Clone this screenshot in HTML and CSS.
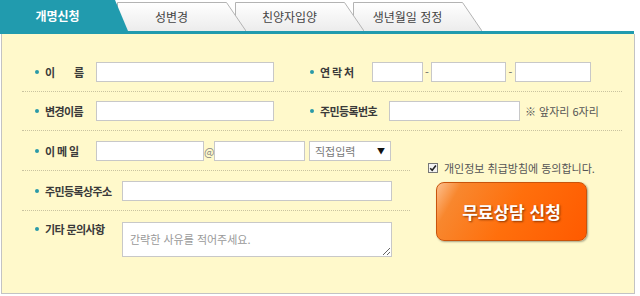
FILE: index.html
```html
<!DOCTYPE html>
<html lang="ko">
    <head>
        <meta charset="utf-8">
        <title>개명신청</title>
        <link rel="stylesheet" href="styles.css">
    </head>
    <body>
        <svg class="defs" width="0" height="0">
            <defs>
                <linearGradient id="tabfill" x1="0" y1="0" x2="0" y2="1">
                    <stop offset="0" stop-color="#ffffff"/>
                    <stop offset="1" stop-color="#ececec"/>
                </linearGradient>
            </defs>
        </svg>
        <div class="wrap">
            <ul class="tabs">
                <li class="tab on">
                    <svg width="128" height="31"><path d="M0 0H115L128 31H0Z" fill="#219bae"/></svg>
                    <span>개명신청</span>
                </li>
                <li class="tab">
                    <svg width="129" height="29"><path d="M0.5 29V0.5H109.5L129 29" fill="url(#tabfill)" stroke="#b3b3b3"/></svg>
                    <span>성변경</span>
                </li>
                <li class="tab">
                    <svg width="129" height="29"><path d="M0.5 29V0.5H109.5L129 29" fill="url(#tabfill)" stroke="#b3b3b3"/></svg>
                    <span>친양자입양</span>
                </li>
                <li class="tab">
                    <svg width="129" height="29"><path d="M0.5 29V0.5H109.5L129 29" fill="url(#tabfill)" stroke="#b3b3b3"/></svg>
                    <span>생년월일 정정</span>
                </li>
            </ul>
            <div class="panel">
                <div class="row">
                    <div class="half">
                        <span class="lbl wide-sp">이름</span>
                        <input class="ipt" style="width:178px">
                    </div>
                    <div class="half">
                        <span class="lbl r" style="width:72px">연 락 처</span>
                        <input class="ipt" style="width:51px">
                        <span class="dash">-</span>
                        <input class="ipt" style="width:75px">
                        <span class="dash">-</span>
                        <input class="ipt" style="width:76px">
                    </div>
                </div>
                <div class="row">
                    <div class="half">
                        <span class="lbl">변경이름</span>
                        <input class="ipt" style="width:178px">
                    </div>
                    <div class="half">
                        <span class="lbl r" style="width:89px">주민등록번호</span>
                        <input class="ipt" style="width:131px">
                        <span class="note">※ 앞자리 6자리</span>
                    </div>
                </div>
                <div class="lower">
                    <div class="lcol">
                        <div class="row">
                            <span class="lbl">이 메 일</span>
                            <input class="ipt" style="width:108px">
                            <span class="at">@</span>
                            <input class="ipt" style="width:91px">
                            <div class="sel">
                                <span>직접입력</span>
                                <span class="arrow">▼</span>
                            </div>
                        </div>
                        <div class="row">
                            <span class="lbl long">주민등록상주소</span>
                            <input class="ipt" style="width:270px">
                        </div>
                        <div class="row memo">
                            <span class="lbl long">기타 문의사항</span>
                            <textarea class="txt" placeholder="간략한 사유를 적어주세요."></textarea>
                        </div>
                    </div>
                    <div class="rcol">
                        <label class="agree">
                            <svg width="10" height="10" viewBox="0 0 10 10">
                                <rect x="0.5" y="0.5" width="9" height="9" fill="#f4f4f4" stroke="#777"/>
                                <path d="M2.2 5.2L4.2 7.2L7.9 2.6" fill="none" stroke="#222" stroke-width="1.6"/>
                            </svg>
                            <span>개인정보 취급방침에 동의합니다.</span>
                        </label>
                        <div class="btn">무료상담 신청</div>
                    </div>
                </div>
            </div>
        </div>
    </body>
</html>
```

FILE: styles.css
```css
body{
    margin: 0px;
    padding: 0px;
    background: #ffffff;
    font-family: "Noto Sans CJK KR", "Liberation Sans", sans-serif;
    color: #333333;
}
.defs{
    position: absolute;
}
.wrap{
    width: 636px;
}
.tabs{
    list-style: none;
    margin: 0;
    padding: 0;
    width: 634px;
    height: 31px;
    display: flex;
    align-items: flex-end;
    border-bottom: 3px solid #219bae;
}
.tab{
    position: relative;
    width: 129px;
    height: 29px;
    margin-left: -11px;
}
.tab svg{
    position: absolute;
    top: 0;
    left: 0;
}
.tab span{
    position: relative;
    display: block;
    width: 109px;
    line-height: 29px;
    text-align: center;
    font-size: 12px;
    color: #444444;
}
.tab:nth-child(1){ z-index: 4; }
.tab:nth-child(2){ z-index: 3; }
.tab:nth-child(3){ z-index: 2; }
.tab:nth-child(4){ z-index: 1; }
.tab.on{
    width: 128px;
    height: 31px;
    margin-left: 0;
}
.tab.on span{
    width: 115px;
    line-height: 32px;
    color: #ffffff;
    font-weight: bold;
}
.panel{
    box-sizing: border-box;
    margin-left: 1px;
    width: 634px;
    height: 260px;
    border: 1px solid #c3c3c3;
    border-top: 0;
    background: #fff9cb;
    padding: 19px 0 0 20px;
}
.row{
    display: flex;
    align-items: center;
    width: 600px;
    height: 38px;
    border-bottom: 1px dotted #c9c3a0;
}
.half{
    display: flex;
    align-items: center;
    width: 278px;
}
.half + .half{
    width: 322px;
}
.lbl{
    box-sizing: border-box;
    flex-shrink: 0;
    display: flex;
    align-items: center;
    width: 74px;
    padding-left: 13px;
    font-size: 11px;
    letter-spacing: -0.6px;
    font-weight: bold;
    color: #3a3a3a;
    white-space: nowrap;
}
.lbl::before{
    content: '';
    flex-shrink: 0;
    width: 4px;
    height: 4px;
    border-radius: 50%;
    background: #2a9aa8;
    margin-right: 6px;
}
.lbl.r{
    padding-left: 10px;
}
.lbl.long{
    width: 100px;
}
.lbl.wide-sp{
    letter-spacing: 19px;
}
.ipt{
    box-sizing: border-box;
    height: 20px;
    margin: 0;
    border: 1px solid #c8c8c8;
    background: #ffffff;
    outline: none;
}
.dash{
    width: 8px;
    text-align: center;
    font-size: 11px;
    color: #666666;
}
.dash + .ipt + .dash{
    width: 9px;
}
.note{
    margin-left: 5px;
    font-size: 11px;
    color: #555555;
}
.lower{
    display: flex;
}
.lcol{
    width: 388px;
}
.lcol .row{
    width: 388px;
    height: 39px;
}
.at{
    width: 10px;
    text-align: center;
    font-size: 11px;
    color: #888888;
}
.sel{
    box-sizing: border-box;
    display: flex;
    align-items: center;
    justify-content: space-between;
    width: 82px;
    height: 20px;
    margin-left: 4px;
    padding: 0 5px;
    border: 1px solid #c8c8c8;
    background: #ffffff;
    font-size: 11px;
    color: #777777;
}
.sel .arrow{
    font-size: 8px;
    color: #111111;
}
.lcol .row.memo{
    align-items: flex-start;
    border-bottom: 0;
    padding-top: 11px;
}
.memo .lbl{
    line-height: 14px;
}
.txt{
    box-sizing: border-box;
    width: 270px;
    height: 35px;
    margin: 0;
    padding: 8px 7px;
    border: 1px solid #c8c8c8;
    font-family: "Noto Sans CJK KR", sans-serif;
    font-size: 11px;
    outline: none;
}
.txt::placeholder{
    color: #999999;
}
.rcol{
    padding: 32px 0 0 18px;
}
.agree{
    display: flex;
    align-items: center;
    gap: 6px;
    height: 10px;
    font-size: 11px;
    color: #555555;
}
.btn{
    box-sizing: border-box;
    width: 151px;
    height: 59px;
    margin: 9px 0 0 8px;
    border: 1px solid #c9540c;
    border-radius: 8px;
    background: linear-gradient(120deg, #fcc08f 0%, #f8872e 14%, #ff6f0c 50%, #ff5a00 100%);
    box-shadow: 1px 1px 2px rgba(0,0,0,0.35);
    color: #ffffff;
    font-size: 17px;
    font-weight: bold;
    line-height: 57px;
    text-align: center;
    text-shadow: 1px 1px 2px rgba(110,40,0,0.8);
}
```
